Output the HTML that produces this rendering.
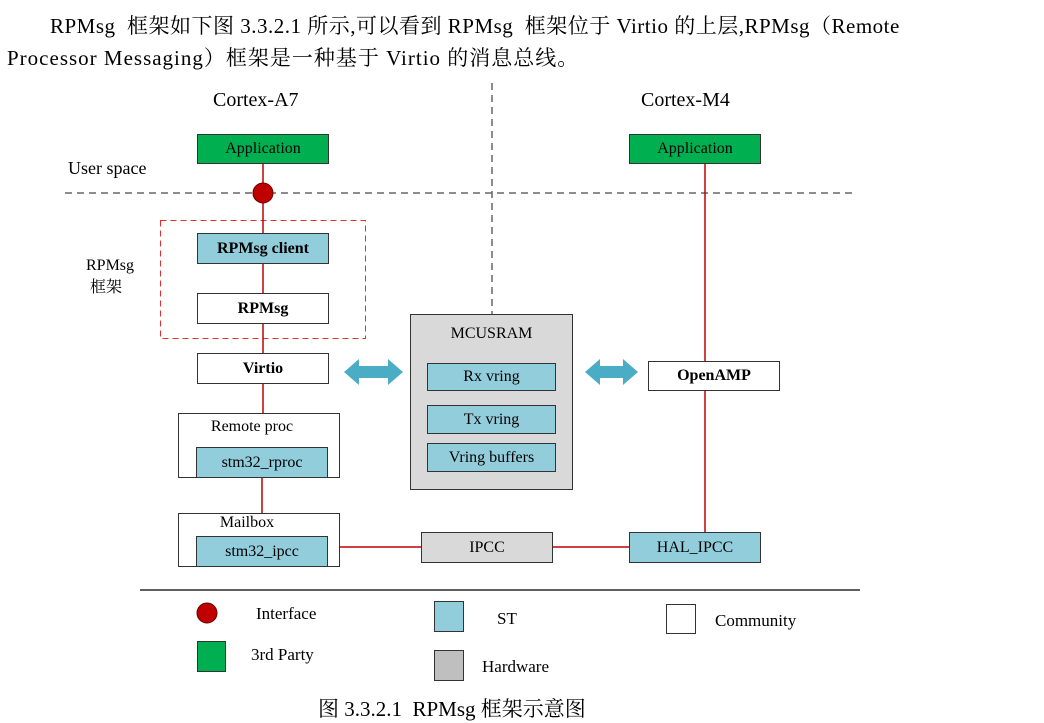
<!DOCTYPE html>
<html><head><meta charset="utf-8"><style>
body{margin:0;width:1044px;height:723px;background:#fff;position:relative;overflow:hidden;font-family:"Liberation Serif","Noto Serif CJK SC",serif;color:#000}
.a{position:absolute;white-space:nowrap}
.b{position:absolute;box-sizing:border-box;border:1.5px solid #333;display:flex;align-items:center;justify-content:center;font-size:16px}
.g{background:#00b050}.c{background:#92cddc}.h{background:#d9d9d9}.w{background:#fff}
</style></head><body>
<div class="a" style="left:50px;top:10px;font-size:21px;letter-spacing:0.5px">RPMsg&nbsp; 框架如下图 3.3.2.1 所示,可以看到 RPMsg&nbsp; 框架位于 Virtio 的上层,RPMsg（Remote</div>
<div class="a" style="left:7px;top:42px;font-size:21px;letter-spacing:1px">Processor Messaging）框架是一种基于 Virtio 的消息总线。</div>
<div class="a" style="left:213px;top:89px;font-size:20px">Cortex-A7</div>
<div class="a" style="left:641px;top:89px;font-size:20px">Cortex-M4</div>
<div class="a" style="left:68px;top:158px;font-size:18px">User space</div>
<div class="a" style="left:86px;top:255px;font-size:16px;line-height:22px">RPMsg<br>&nbsp;框架</div>
<svg class="a" style="left:0;top:0" width="1044" height="723">
<line x1="65" y1="193" x2="855" y2="193" stroke="#666" stroke-width="1.5" stroke-dasharray="7,5"/>
<line x1="492" y1="83" x2="492" y2="314" stroke="#666" stroke-width="1.5" stroke-dasharray="7,5"/>
<rect x="160.5" y="220.5" width="205" height="118" fill="none" stroke="#e03030" stroke-width="1" stroke-dasharray="6,4"/>
<line x1="263" y1="163" x2="263" y2="413" stroke="#c00000" stroke-width="1.5"/>
<line x1="262" y1="477" x2="262" y2="513" stroke="#c00000" stroke-width="1.5"/>
<line x1="705" y1="163" x2="705" y2="532" stroke="#c00000" stroke-width="1.5"/>
<line x1="339" y1="547" x2="629" y2="547" stroke="#c00000" stroke-width="1.5"/>
<circle cx="263" cy="193" r="10" fill="#c00000" stroke="#600" stroke-width="1"/>
<polygon points="344,372 359,359 359,366 388,366 388,359 403,372 388,385 388,378 359,378 359,385" fill="#4bacc6"/>
<polygon points="585,372 600,359 600,366 623,366 623,359 638,372 623,385 623,378 600,378 600,385" fill="#4bacc6"/>
<line x1="140" y1="590" x2="860" y2="590" stroke="#000" stroke-width="1.2"/>
<circle cx="207" cy="613" r="10" fill="#c00000" stroke="#600" stroke-width="1"/>
</svg>
<div class="b g" style="left:197px;top:134px;width:132px;height:30px">Application</div>
<div class="b g" style="left:629px;top:134px;width:132px;height:30px">Application</div>
<div class="b c" style="left:197px;top:233px;width:132px;height:31px;font-weight:bold">RPMsg client</div>
<div class="b w" style="left:197px;top:293px;width:132px;height:31px;font-weight:bold">RPMsg</div>
<div class="b w" style="left:197px;top:353px;width:132px;height:31px;font-weight:bold">Virtio</div>
<div class="b w" style="left:178px;top:413px;width:162px;height:65px;align-items:flex-start;padding-top:4px;padding-right:14px">Remote proc</div>
<div class="b c" style="left:196px;top:447px;width:132px;height:31px">stm32_rproc</div>
<div class="b w" style="left:178px;top:513px;width:162px;height:54px;align-items:flex-start;padding-top:0;padding-right:24px">Mailbox</div>
<div class="b c" style="left:196px;top:536px;width:132px;height:31px">stm32_ipcc</div>
<div class="b h" style="left:410px;top:314px;width:163px;height:176px;align-items:flex-start;padding-top:10px">MCUSRAM</div>
<div class="b c" style="left:427px;top:363px;width:129px;height:28px">Rx vring</div>
<div class="b c" style="left:427px;top:405px;width:129px;height:29px">Tx vring</div>
<div class="b c" style="left:427px;top:443px;width:129px;height:29px">Vring buffers</div>
<div class="b w" style="left:648px;top:361px;width:132px;height:30px;font-weight:bold">OpenAMP</div>
<div class="b h" style="left:421px;top:532px;width:132px;height:31px">IPCC</div>
<div class="b c" style="left:629px;top:532px;width:132px;height:31px">HAL_IPCC</div>
<div class="b g" style="left:197px;top:641px;width:29px;height:31px"></div>
<div class="b c" style="left:434px;top:601px;width:30px;height:31px"></div>
<div class="b" style="left:434px;top:650px;width:30px;height:31px;background:#bfbfbf"></div>
<div class="b w" style="left:666px;top:604px;width:30px;height:30px"></div>
<div class="a" style="left:256px;top:604px;font-size:17px">Interface</div>
<div class="a" style="left:251px;top:645px;font-size:17px">3rd Party</div>
<div class="a" style="left:497px;top:609px;font-size:17px">ST</div>
<div class="a" style="left:482px;top:657px;font-size:17px">Hardware</div>
<div class="a" style="left:715px;top:611px;font-size:17px">Community</div>
<div class="a" style="left:318px;top:693px;font-size:21px">图 3.3.2.1&nbsp; RPMsg 框架示意图</div>
</body></html>
